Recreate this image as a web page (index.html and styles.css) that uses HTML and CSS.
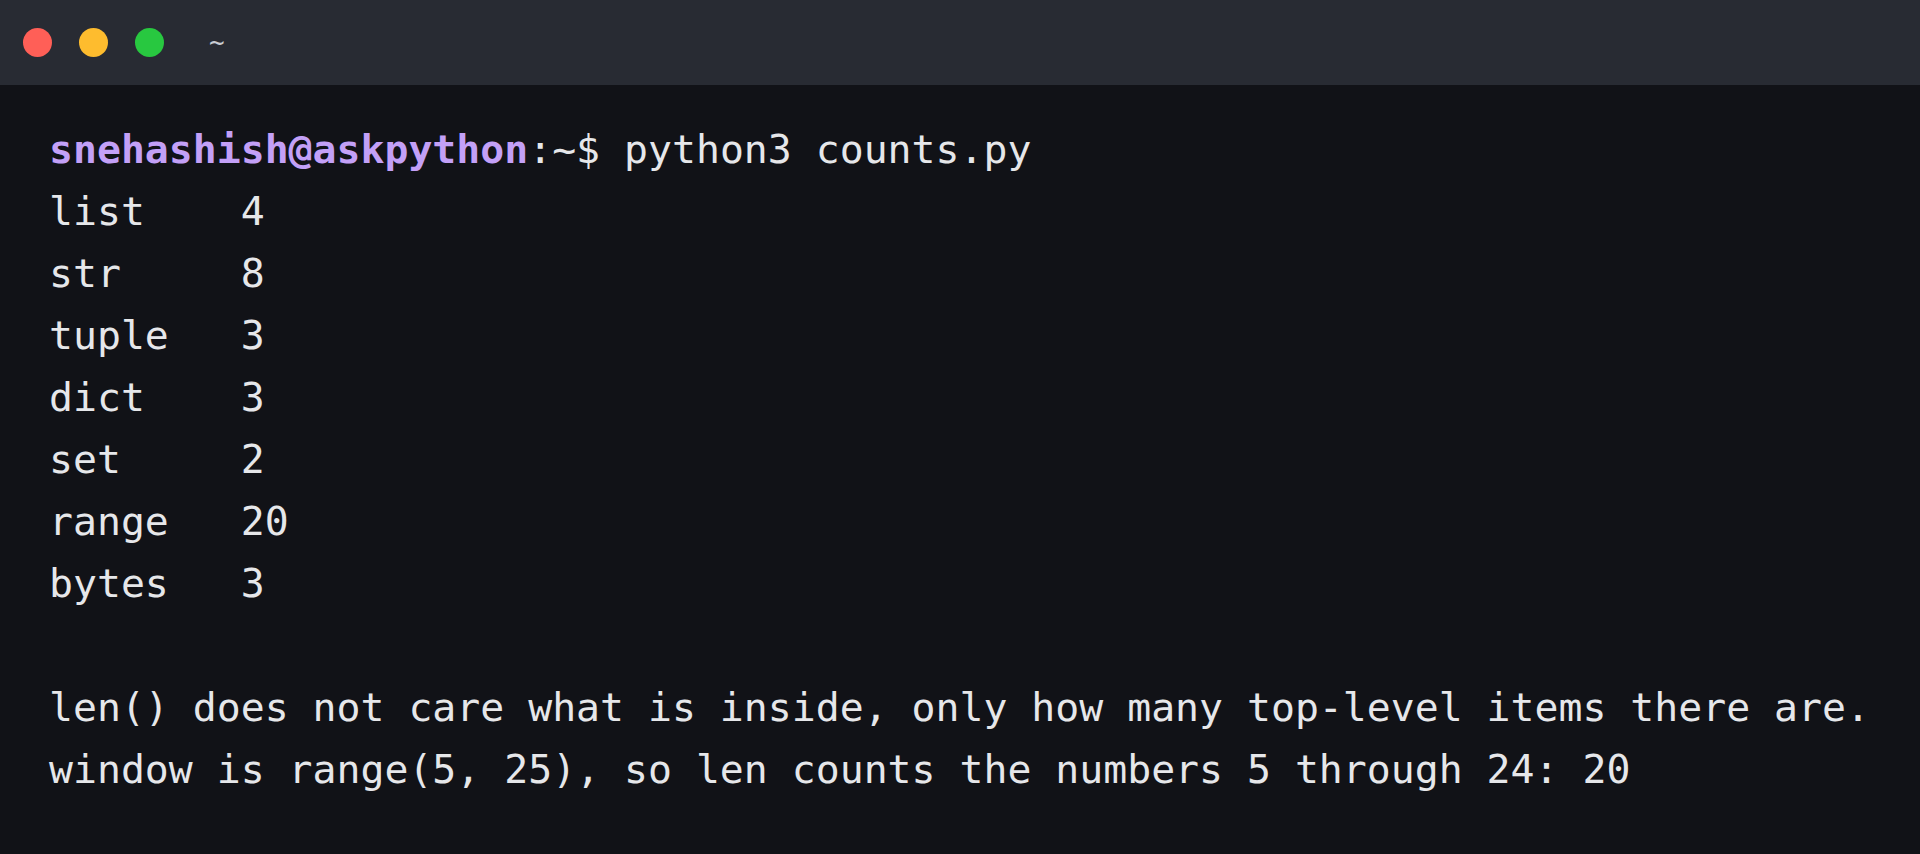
FILE: index.html
```html
<!DOCTYPE html>
<html lang="en">
<head>
<meta charset="utf-8">
<title>Terminal</title>
<link rel="stylesheet" href="styles.css">
</head>
<body>
<div class="window">
  <header class="titlebar">
    <div class="lights">
      <span class="light red"></span>
      <span class="light yellow"></span>
      <span class="light green"></span>
    </div>
    <span class="title">~</span>
  </header>
  <main class="terminal">
<div class="line"><span class="user">snehashish@askpython</span>:~$ python3 counts.py</div>
<div class="line">list    4</div>
<div class="line">str     8</div>
<div class="line">tuple   3</div>
<div class="line">dict    3</div>
<div class="line">set     2</div>
<div class="line">range   20</div>
<div class="line">bytes   3</div>
<div class="line"> </div>
<div class="line">len() does not care what is inside, only how many top-level items there are.</div>
<div class="line">window is range(5, 25), so len counts the numbers 5 through 24: 20</div>
  </main>
</div>
</body>
</html>
```

FILE: styles.css
```css
html, body {
  margin: 0;
  padding: 0;
  background: #111217;
}

.window {
  display: flex;
  flex-direction: column;
  width: 1920px;
  height: 854px;
  background: #111217;
  overflow: hidden;
}

.titlebar {
  height: 85px;
  flex: 0 0 85px;
  background: #282b33;
  display: flex;
  align-items: center;
  padding-left: 23px;
  box-sizing: border-box;
}

.lights {
  display: flex;
  gap: 27px;
}

.light {
  width: 29px;
  height: 29px;
  border-radius: 50%;
  display: block;
}

.red { background: #ff5f57; }
.yellow { background: #febc2e; }
.green { background: #28c840; }

.title {
  margin-left: 45px;
  color: #c9ccd3;
  font-family: "DejaVu Sans Mono", monospace;
  font-size: 26px;
  line-height: 1;
  margin-top: -2px;
}

.terminal {
  padding: 33px 0 0 49px;
  font-family: "DejaVu Sans Mono", monospace;
  font-size: 39.8px;
  line-height: 62px;
  color: #e6e7ea;
}

.line {
  white-space: pre;
  height: 62px;
}

.user {
  color: #c3a0f7;
  font-weight: bold;
}
```
